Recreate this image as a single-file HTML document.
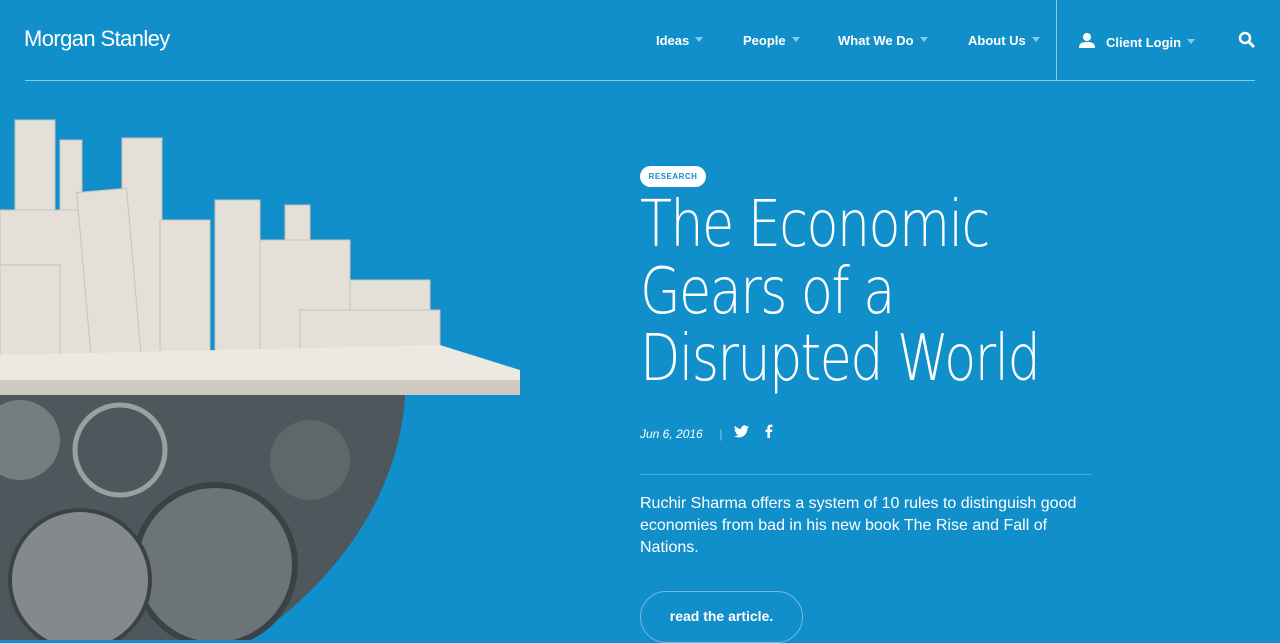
<!DOCTYPE html>
<html><head><meta charset="utf-8"><style>
*{margin:0;padding:0;box-sizing:border-box}
body{width:1280px;height:640px;overflow:hidden;background:#118fca;font-family:"Liberation Sans",sans-serif;color:#fff;position:relative}
.logo{position:absolute;left:24px;top:26px;font-size:22px;letter-spacing:-0.6px}
.hr{position:absolute;left:25px;top:80px;width:1230px;height:1px;background:#8cc8e6}
.vr{position:absolute;left:1056px;top:0;width:1px;height:80px;background:#8cc8e6}
.nav{position:absolute;top:33px;font-size:13px;font-weight:bold}
.nav:after{content:"";display:inline-block;margin-left:6px;border:4px solid transparent;border-top:5px solid #8cc8e6;vertical-align:-1px}
.tag{position:absolute;left:640px;top:166px;width:66px;height:21px;border-radius:11px;background:#fff;color:#118fca;font-size:8px;font-weight:bold;text-align:center;line-height:21px;letter-spacing:.5px}
h1{position:absolute;left:640px;top:192px;font-size:64px;line-height:67px;letter-spacing:-2px;font-family:"DejaVu Sans","Liberation Sans",sans-serif;font-weight:200;transform:scaleX(.82);transform-origin:left top;white-space:nowrap}
.date{position:absolute;left:640px;top:427px;font-size:12px;font-style:italic}
.line{position:absolute;left:640px;top:474px;width:452px;height:1px;background:#4aaad8}
.p{position:absolute;left:640px;top:493px;width:460px;font-size:16px;line-height:22px}
.btn{position:absolute;left:640px;top:591px;width:163px;height:52px;border:1.5px solid #6dbbe0;border-radius:26px;font-weight:bold;font-size:14px;text-align:center;line-height:48px}
</style></head><body>
<div class="logo">Morgan Stanley</div>
<div class="nav" style="left:656px">Ideas</div>
<div class="nav" style="left:743px">People</div>
<div class="nav" style="left:838px">What We Do</div>
<div class="nav" style="left:968px">About Us</div>
<div class="vr"></div>
<svg style="position:absolute;left:1079px;top:33px" width="16" height="15" viewBox="0 0 16 15"><circle cx="8" cy="4" r="4" fill="#fff"/><path d="M0 15c0-5 3-6 8-6s8 1 8 6z" fill="#fff"/></svg>
<div class="nav" style="left:1106px;top:35px">Client Login</div>
<svg style="position:absolute;left:1238px;top:31px" width="18" height="18"><circle cx="7" cy="7" r="5" stroke="#fff" stroke-width="2.5" fill="none"/><path d="M11 11l5 5" stroke="#fff" stroke-width="3"/></svg>
<div class="hr"></div>
<svg style="position:absolute;left:0;top:110px" width="530" height="530">
<g fill="#e4dfd8" stroke="#c8c2ba">
<rect x="15" y="10" width="40" height="240"/><rect x="60" y="30" width="22" height="220"/><rect x="122" y="28" width="40" height="220"/><rect x="0" y="100" width="120" height="150"/>
<rect x="84" y="80" width="50" height="170" transform="rotate(-5 110 165)"/><rect x="215" y="90" width="45" height="160"/><rect x="160" y="110" width="50" height="140"/>
<rect x="285" y="95" width="25" height="150"/><rect x="260" y="130" width="90" height="120"/><rect x="350" y="170" width="80" height="80"/>
<rect x="0" y="155" width="60" height="100"/><rect x="300" y="200" width="140" height="50"/>
</g>
<path d="M0 245L440 235L520 260L520 285L0 285Z" fill="#ece8e2"/>
<path d="M0 270L520 270L520 285L0 285Z" fill="#cfc9c0"/>
<path d="M0 285L405 285C400 380 340 470 250 530L0 530Z" fill="#4e575c"/>
<circle cx="215" cy="455" r="80" fill="#6d7478" stroke="#3a4246" stroke-width="6"/>
<circle cx="80" cy="470" r="70" fill="#848a8c" stroke="#3a4246" stroke-width="4"/>
<circle cx="120" cy="340" r="45" fill="none" stroke="#9aa0a2" stroke-width="5"/>
<circle cx="310" cy="350" r="40" fill="#5f676b"/>
<circle cx="20" cy="330" r="40" fill="#767d80"/>
</svg>
<div class="tag">RESEARCH</div>
<h1>The Economic<br>Gears of a<br>Disrupted World</h1>
<div class="date">Jun 6, 2016 &nbsp;&nbsp;&nbsp; <span style="font-style:normal;color:#8cc8e6">|</span></div>
<svg style="position:absolute;left:734px;top:425px" width="15" height="13" viewBox="0 0 24 20"><path d="M24 2.4a10 10 0 0 1-2.8.8A5 5 0 0 0 23.3.5a10 10 0 0 1-3.1 1.2A4.9 4.9 0 0 0 11.8 6 14 14 0 0 1 1.7.9a4.9 4.9 0 0 0 1.5 6.6A4.9 4.9 0 0 1 1 6.9a4.9 4.9 0 0 0 3.9 4.8 5 5 0 0 1-2.2.1 4.9 4.9 0 0 0 4.6 3.4A9.9 9.9 0 0 1 0 17.3 14 14 0 0 0 7.5 19.5c9.1 0 14-7.5 14-14v-.6A10 10 0 0 0 24 2.4z" fill="#fff"/></svg>
<svg style="position:absolute;left:765px;top:424px" width="8" height="14" viewBox="0 0 8 14"><path d="M5 14V8h2l.4-2.4H5V4c0-.7.2-1.1 1.1-1.1H7.5V.7A17 17 0 0 0 5.6.6C3.7.6 2.4 1.7 2.4 3.8v1.8H.5V8h1.9v6z" fill="#fff"/></svg>
<div class="line"></div>
<div class="p">Ruchir Sharma offers a system of 10 rules to distinguish good economies from bad in his new book The Rise and Fall of Nations.</div>
<div class="btn">read the article.</div>
</body></html>
